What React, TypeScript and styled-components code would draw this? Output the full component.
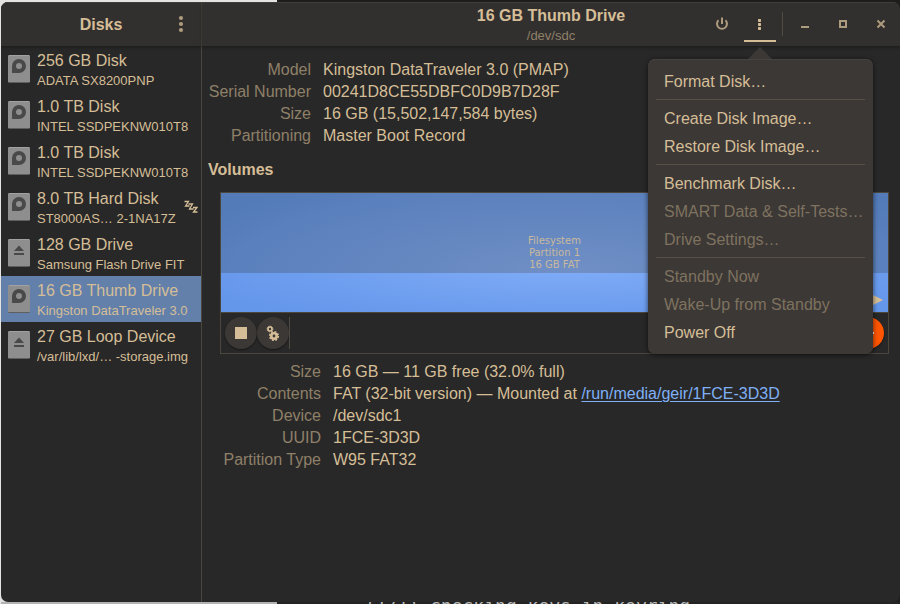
import React from "react";
import styled, { createGlobalStyle } from "styled-components";

const color = {
  base: "#282828",
  header: "#32302f",
  popover: "#3c3836",
  line: "#4b473c",
  text: "#d5be97",
  dim: "#8f8068",
  faint: "#7e725f",
  icon: "#ad9b7d",
  selected: "#6380ab",
  link: "#7fb0f5",
};

const GlobalStyle = createGlobalStyle`
  * { box-sizing: border-box; }
  body {
    margin: 0;
    color: ${color.text};
    font: 16px/22px "Liberation Sans", Arial, sans-serif;
  }
  button { font: inherit; color: inherit; border: 0; padding: 0; background: none; }
  h1, h2, p, ul, dl, dd, dt { margin: 0; padding: 0; font-size: inherit; }
  ul { list-style: none; }
`;

const Desktop = styled.div`
  display: flex;
  flex-direction: column;
  min-height: 100vh;
  padding: 2px 0 0 1px;
  overflow: hidden;
  background: linear-gradient(90deg, #e4e4e2 277px, #1e1d1c 277px);
`;

const Terminal = styled.div`
  height: 2px;
  overflow: hidden;
  padding-left: 364px;
  color: #b8b8b8;
  background: linear-gradient(90deg, #b2b2b2 276px, #232323 276px);
  white-space: pre;
  font: 18px/7px "DejaVu Sans Mono", monospace;
`;

const Window = styled.div`
  flex: 1;
  display: grid;
  grid-template-columns: 201px 1fr;
  background: ${color.base};
  border-radius: 7px;
  overflow: hidden;
`;

const Sidebar = styled.aside`
  border-right: 1px solid ${color.line};
`;

const Main = styled.main`
  min-width: 0;
`;

const HeaderBar = styled.header`
  position: relative;
  display: grid;
  grid-template-columns: 1fr auto 1fr;
  align-items: center;
  height: 44px;
  background: ${color.header};
  box-shadow: inset 0 1px #403d3a, 0 1px #1f1f1e, 0 2px 3px #00000040;
`;

const Title = styled.h1<{ $stacked?: boolean }>`
  grid-column: 2;
  padding-top: ${(p) => (p.$stacked ? "4px" : "2px")};
  text-align: center;
  font-weight: bold;
  line-height: 20px;
`;

const Subtitle = styled.p`
  color: ${color.dim};
  font-size: 13px;
  font-weight: normal;
  line-height: 20px;
`;

const HeaderActions = styled.div`
  justify-self: end;
  display: flex;
  align-items: center;
  height: 100%;
`;

const SidebarActions = styled(HeaderActions)`
  padding-right: 4px;
`;

const IconButton = styled.button<{ $active?: boolean; $wide?: boolean }>`
  display: grid;
  place-items: center;
  width: ${(p) => (p.$wide ? "38px" : "32px")};
  height: 36px;
  color: ${(p) => (p.$active ? color.text : color.icon)};
  box-shadow: ${(p) => (p.$active ? `inset 0 -2px ${color.text}` : "none")};
`;

const ActionSpacer = styled.span`
  width: 6px;
`;

const HeaderDivider = styled.span`
  width: 1px;
  height: 24px;
  margin: 0 3px 0 6px;
  background: #504a40;
`;

const MenuAnchor = styled.div`
  position: relative;
`;

const Popover = styled.div`
  position: absolute;
  z-index: 2;
  top: 53px;
  left: 50%;
  width: 225px;
  margin-left: -112px;
  padding: 8px;
  background: ${color.popover};
  border-radius: 7px;
  box-shadow: inset 0 1px #464240, 0 1px 5px #000000a0;
  &::before {
    content: "";
    position: absolute;
    left: 100px;
    top: -12px;
    border: 12px solid transparent;
    border-top: 0;
    border-bottom-color: ${color.popover};
  }
`;

const MenuItem = styled.button`
  display: block;
  width: 100%;
  height: 28px;
  padding: 2px 8px 0;
  text-align: left;
  line-height: 26px;
  white-space: nowrap;
  &:disabled { color: ${color.faint}; }
`;

const MenuRule = styled.hr`
  height: 1px;
  margin: 4px 0;
  border: 0;
  background: #575146;
`;

const DiskRow = styled.button<{ $selected?: boolean }>`
  display: flex;
  align-items: center;
  gap: 7px;
  width: 100%;
  height: 46px;
  padding: 0 3px 0 7px;
  text-align: left;
  white-space: nowrap;
  background: ${(p) => (p.$selected ? color.selected : "transparent")};
`;

const DiskText = styled.span`
  flex: 1;
  min-width: 0;
  padding-top: 2px;
`;

const DiskName = styled.span`
  display: block;
  line-height: 22px;
`;

const DiskModel = styled.span`
  display: block;
  font-size: 13px;
  line-height: 18px;
`;

const DriveIcon = styled.svg`
  flex: none;
`;

const Content = styled.div`
  padding: 13px 11px 0 6px;
`;

const Details = styled.dl<{ $labels: number }>`
  display: grid;
  grid-template-columns: ${(p) => p.$labels}px 1fr;
  column-gap: 12px;
`;

const Label = styled.dt`
  color: ${color.dim};
  text-align: right;
  white-space: nowrap;
`;

const Value = styled.dd`
  white-space: nowrap;
`;

const Link = styled.a`
  color: ${color.link};
  text-underline-offset: 2px;
`;

const SectionTitle = styled.h2`
  margin: 12px 0 11px;
  font-weight: bold;
`;

const VolumeSection = styled.section`
  padding-left: 12px;
`;

const VolumeBox = styled.div`
  margin-bottom: 7px;
  border: 1px solid ${color.line};
`;

const Partition = styled.button`
  position: relative;
  display: grid;
  place-items: center;
  width: 100%;
  height: 119px;
  color: #c9b99c;
  font: 10px/12px "DejaVu Sans", sans-serif;
  background:
    radial-gradient(ellipse 420px 110px at 52% 80px, #708fc5, #5a80bd 80%, #527bb8) 0 0 / 100% 80px no-repeat,
    radial-gradient(ellipse 400px 60px at 52% 75px, #80acf7, #6496ea);
`;

const MountedMark = styled.svg`
  position: absolute;
  right: 5px;
  bottom: 6px;
`;

const VolumeToolbar = styled.div`
  display: flex;
  align-items: center;
  height: 41px;
  padding: 0 4px;
  border-top: 1px solid ${color.line};
`;

const RoundButton = styled.button<{ $danger?: boolean }>`
  display: grid;
  place-items: center;
  width: 32px;
  height: 32px;
  margin-left: ${(p) => (p.$danger ? "auto" : "0")};
  border-radius: 50%;
  color: ${(p) => (p.$danger ? "#ffffff" : color.text)};
  background: ${(p) => (p.$danger ? "#fe5500" : color.popover)};
  box-shadow: 0 1px 2px #00000070;
`;

const ToolbarDivider = styled.span`
  width: 1px;
  height: 32px;
  background: #504b40;
`;

type Kind = "disk" | "media";

const Drive = ({ kind }: { kind: Kind }) => (
  <DriveIcon width="22" height="28" viewBox="0 0 22 28" aria-hidden="true">
    <rect width="22" height="28" rx="1.5" fill="#5f5f5f" />
    <rect width="22" height="27" rx="1.5" fill="#a2a2a2" />
    <rect y="1" width="22" height="26" rx="1" fill="#8e8e8e" />
    {kind === "disk" ? (
      <path
        fill="#494949"
        fillRule="evenodd"
        d="M4 18V11A7 7 0 1 1 11 18ZM11 8a3 3 0 1 0 0 6a3 3 0 0 0 0-6Z"
      />
    ) : (
      <path fill="#494949" d="M11 6.5L16 12H6ZM6 14h10v2H6Z" />
    )}
  </DriveIcon>
);

const Sleeping = () => (
  <svg width="14" height="14" viewBox="0 0 14 14" fill="none" stroke={color.text} strokeWidth="1.3" aria-label="Standby">
    <path d="M.5 1.500H4.500L1.500 6H5.500M4.500 4H8.500L5.500 9H9.500M9 7.500H13L9.500 12H13.500" />
  </svg>
);

const PowerIcon = () => (
  <svg width="14" height="14" viewBox="0 0 14 14" fill="none" stroke="currentColor" strokeWidth="2" aria-hidden="true">
    <path d="M3.500 3.300A5 5 0 1 0 10.500 3.300M7 .5V7" />
  </svg>
);

const DotsIcon = ({ large }: { large?: boolean }) =>
  large ? (
    <svg width="16" height="18" viewBox="0 0 16 18" fill="currentColor" aria-hidden="true">
      <circle cx="8" cy="3" r="2.1" />
      <circle cx="8" cy="9" r="2.1" />
      <circle cx="8" cy="15" r="2.1" />
    </svg>
  ) : (
    <svg width="16" height="12" viewBox="0 0 16 12" fill="currentColor" aria-hidden="true">
      <rect x="6" y="1" width="3" height="3" rx=".8" />
      <rect x="6" y="5" width="3" height="3" rx=".8" />
      <rect x="6" y="9" width="3" height="3" rx=".8" />
    </svg>
  );

const MinimizeIcon = () => (
  <svg width="10" height="10" viewBox="0 0 10 10" aria-hidden="true">
    <path fill="currentColor" d="M1 7h8v2H1Z" />
  </svg>
);

const MaximizeIcon = () => (
  <svg width="10" height="10" viewBox="0 0 10 10" aria-hidden="true">
    <rect x="2" y="2" width="6" height="6" fill="none" stroke="currentColor" strokeWidth="2" />
  </svg>
);

const CloseIcon = () => (
  <svg width="10" height="10" viewBox="0 0 10 10" aria-hidden="true">
    <path d="M1.500 1.500l7 7M8.500 1.500l-7 7" stroke="currentColor" strokeWidth="2" />
  </svg>
);

const StopIcon = () => (
  <svg width="12" height="12" viewBox="0 0 12 12" aria-hidden="true">
    <rect width="12" height="12" fill="currentColor" />
  </svg>
);

const GearsIcon = () => (
  <svg width="16" height="16" viewBox="0 0 16 16" fill="none" stroke="currentColor" aria-hidden="true">
    <circle cx="5" cy="4" r="2" strokeWidth="1.600" />
    <circle cx="5" cy="4" r="2.900" strokeWidth="1" strokeDasharray="1.300 1" />
    <circle cx="9" cy="11" r="2.700" strokeWidth="2.600" />
    <circle cx="9" cy="11" r="4.300" strokeWidth="1.600" strokeDasharray="1.900 1.470" />
  </svg>
);

const MinusIcon = () => (
  <svg width="12" height="12" viewBox="0 0 12 12" aria-hidden="true">
    <path fill="currentColor" d="M0 5h12v2H0Z" />
  </svg>
);

interface Disk {
  name: string;
  model: string;
  kind: Kind;
  selected?: boolean;
  asleep?: boolean;
}

const disks: Disk[] = [
  { name: "256 GB Disk", model: "ADATA SX8200PNP", kind: "disk" },
  { name: "1.0 TB Disk", model: "INTEL SSDPEKNW010T8", kind: "disk" },
  { name: "1.0 TB Disk", model: "INTEL SSDPEKNW010T8", kind: "disk" },
  { name: "8.0 TB Hard Disk", model: "ST8000AS…  2-1NA17Z", kind: "disk", asleep: true },
  { name: "128 GB Drive", model: "Samsung Flash Drive FIT", kind: "media" },
  { name: "16 GB Thumb Drive", model: "Kingston DataTraveler 3.0", kind: "disk", selected: true },
  { name: "27 GB Loop Device", model: "/var/lib/lxd/… -storage.img", kind: "media" },
];

const menu: { label: string; disabled?: boolean }[][] = [
  [{ label: "Format Disk..." }],
  [{ label: "Create Disk Image..." }, { label: "Restore Disk Image..." }],
  [
    { label: "Benchmark Disk..." },
    { label: "SMART Data & Self-Tests...", disabled: true },
    { label: "Drive Settings...", disabled: true },
  ],
  [
    { label: "Standby Now", disabled: true },
    { label: "Wake-Up from Standby", disabled: true },
    { label: "Power Off" },
  ],
];

const DriveMenu = () => (
  <Popover role="menu">
    {menu.map((group, i) => (
      <React.Fragment key={i}>
        {i > 0 && <MenuRule />}
        {group.map((item) => (
          <MenuItem key={item.label} role="menuitem" disabled={item.disabled}>
            {item.label.replace("...", "…")}
          </MenuItem>
        ))}
      </React.Fragment>
    ))}
  </Popover>
);

export default function App() {
  return (
    <>
      <GlobalStyle />
      <Desktop>
        <Window>
          <Sidebar>
            <HeaderBar>
              <Title>Disks</Title>
              <SidebarActions>
                <IconButton aria-label="Main menu">
                  <DotsIcon large />
                </IconButton>
              </SidebarActions>
            </HeaderBar>
            <ul>
              {disks.map((d, i) => (
                <li key={i}>
                  <DiskRow $selected={d.selected}>
                    <Drive kind={d.kind} />
                    <DiskText>
                      <DiskName>{d.name}</DiskName>
                      <DiskModel>{d.model}</DiskModel>
                    </DiskText>
                    {d.asleep && <Sleeping />}
                  </DiskRow>
                </li>
              ))}
            </ul>
          </Sidebar>
          <Main>
            <HeaderBar>
              <Title as="div" $stacked>
                16 GB Thumb Drive
                <Subtitle>/dev/sdc</Subtitle>
              </Title>
              <HeaderActions>
                <IconButton aria-label="Power off">
                  <PowerIcon />
                </IconButton>
                <ActionSpacer />
                <MenuAnchor>
                  <IconButton $active aria-label="Drive options" aria-expanded="true">
                    <DotsIcon />
                  </IconButton>
                  <DriveMenu />
                </MenuAnchor>
                <HeaderDivider />
                <IconButton $wide aria-label="Minimize">
                  <MinimizeIcon />
                </IconButton>
                <IconButton $wide aria-label="Maximize">
                  <MaximizeIcon />
                </IconButton>
                <IconButton $wide aria-label="Close">
                  <CloseIcon />
                </IconButton>
              </HeaderActions>
            </HeaderBar>
            <Content>
              <Details $labels={103}>
                <Label>Model</Label>
                <Value>Kingston DataTraveler 3.0 (PMAP)</Value>
                <Label>Serial Number</Label>
                <Value>00241D8CE55DBFC0D9B7D28F</Value>
                <Label>Size</Label>
                <Value>16 GB (15,502,147,584 bytes)</Value>
                <Label>Partitioning</Label>
                <Value>Master Boot Record</Value>
              </Details>
              <SectionTitle>Volumes</SectionTitle>
              <VolumeSection>
                <VolumeBox>
                  <Partition>
                    <span>
                      Filesystem
                      <br />
                      Partition 1
                      <br />
                      16 GB FAT
                    </span>
                    <MountedMark width="12" height="12" viewBox="0 0 12 12" aria-hidden="true">
                      <path d="M0 0L12 6L0 12Z" fill={color.text} />
                    </MountedMark>
                  </Partition>
                  <VolumeToolbar>
                    <RoundButton aria-label="Unmount">
                      <StopIcon />
                    </RoundButton>
                    <RoundButton aria-label="Partition options">
                      <GearsIcon />
                    </RoundButton>
                    <ToolbarDivider />
                    <RoundButton $danger aria-label="Delete partition">
                      <MinusIcon />
                    </RoundButton>
                  </VolumeToolbar>
                </VolumeBox>
                <Details $labels={101}>
                  <Label>Size</Label>
                  <Value>16 GB — 11 GB free (32.0% full)</Value>
                  <Label>Contents</Label>
                  <Value>
                    FAT (32-bit version) — Mounted at <Link href="#mount">/run/media/geir/1FCE-3D3D</Link>
                  </Value>
                  <Label>Device</Label>
                  <Value>/dev/sdc1</Value>
                  <Label>UUID</Label>
                  <Value>1FCE-3D3D</Value>
                  <Label>Partition Type</Label>
                  <Value>W95 FAT32</Value>
                </Details>
              </VolumeSection>
            </Content>
          </Main>
        </Window>
        <Terminal>(1/1) checking keys in keyring</Terminal>
      </Desktop>
    </>
  );
}
